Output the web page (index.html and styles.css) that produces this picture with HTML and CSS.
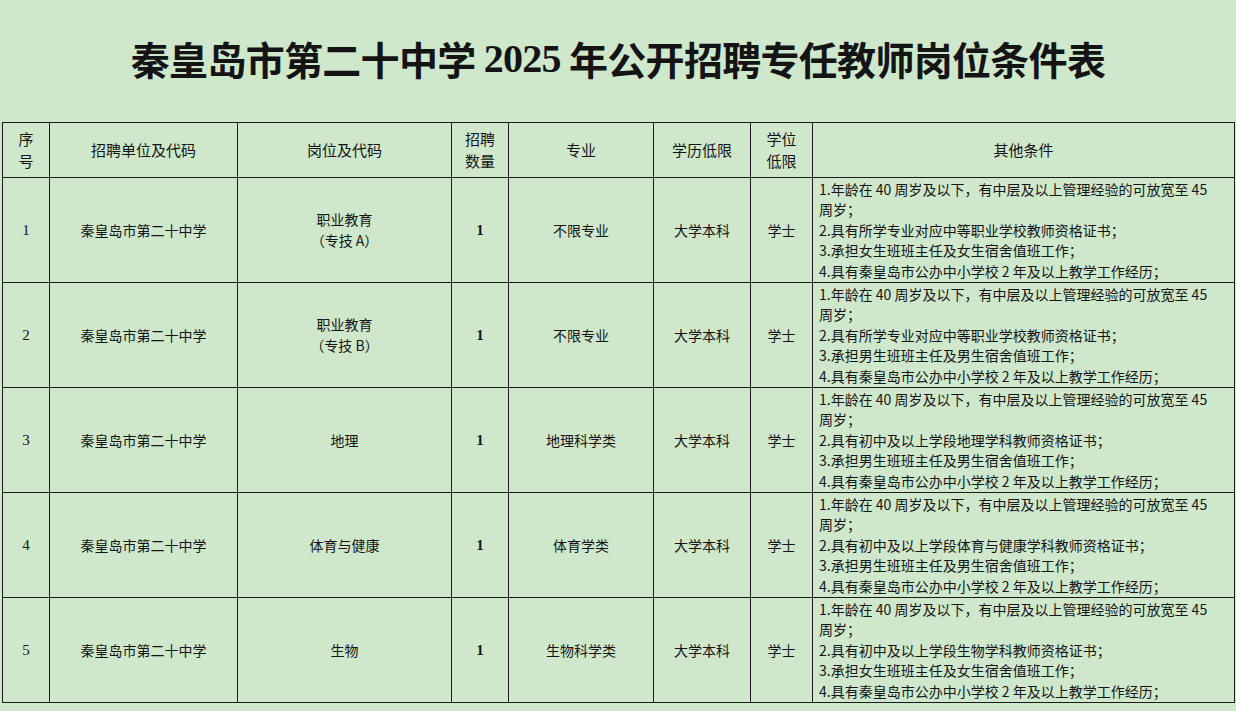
FILE: index.html
```html
<!DOCTYPE html>
<html lang="zh-CN">
<head>
<meta charset="utf-8">
<title>秦皇岛市第二十中学2025年公开招聘专任教师岗位条件表</title>
<link rel="stylesheet" href="styles.css">
</head>
<body>
<div class="page">
  <h1 class="title">秦皇岛市第二十中学 <span class="num">2025</span> 年公开招聘专任教师岗位条件表</h1>
  <table class="grid">
    <colgroup>
      <col class="c1"><col class="c2"><col class="c3"><col class="c4"><col class="c5"><col class="c6"><col class="c7"><col class="c8">
    </colgroup>
    <thead>
      <tr class="head">
        <th>序<br>号</th>
        <th>招聘单位及代码</th>
        <th>岗位及代码</th>
        <th>招聘<br>数量</th>
        <th>专业</th>
        <th>学历低限</th>
        <th>学位<br>低限</th>
        <th>其他条件</th>
      </tr>
    </thead>
    <tbody>
      <tr class="row">
        <td class="seq">1</td>
        <td>秦皇岛市第二十中学</td>
        <td>职业教育<br>（专技 A）</td>
        <td class="count">1</td>
        <td>不限专业</td>
        <td>大学本科</td>
        <td>学士</td>
        <td class="cond"><div>1.年龄在 40 周岁及以下，有中层及以上管理经验的可放宽至 45</div><div>周岁；</div><div>2.具有所学专业对应中等职业学校教师资格证书；</div><div>3.承担女生班班主任及女生宿舍值班工作；</div><div>4.具有秦皇岛市公办中小学校 2 年及以上教学工作经历；</div></td>
      </tr>
      <tr class="row">
        <td class="seq">2</td>
        <td>秦皇岛市第二十中学</td>
        <td>职业教育<br>（专技 B）</td>
        <td class="count">1</td>
        <td>不限专业</td>
        <td>大学本科</td>
        <td>学士</td>
        <td class="cond"><div>1.年龄在 40 周岁及以下，有中层及以上管理经验的可放宽至 45</div><div>周岁；</div><div>2.具有所学专业对应中等职业学校教师资格证书；</div><div>3.承担男生班班主任及男生宿舍值班工作；</div><div>4.具有秦皇岛市公办中小学校 2 年及以上教学工作经历；</div></td>
      </tr>
      <tr class="row">
        <td class="seq">3</td>
        <td>秦皇岛市第二十中学</td>
        <td>地理</td>
        <td class="count">1</td>
        <td>地理科学类</td>
        <td>大学本科</td>
        <td>学士</td>
        <td class="cond"><div>1.年龄在 40 周岁及以下，有中层及以上管理经验的可放宽至 45</div><div>周岁；</div><div>2.具有初中及以上学段地理学科教师资格证书；</div><div>3.承担男生班班主任及男生宿舍值班工作；</div><div>4.具有秦皇岛市公办中小学校 2 年及以上教学工作经历；</div></td>
      </tr>
      <tr class="row">
        <td class="seq">4</td>
        <td>秦皇岛市第二十中学</td>
        <td>体育与健康</td>
        <td class="count">1</td>
        <td>体育学类</td>
        <td>大学本科</td>
        <td>学士</td>
        <td class="cond"><div>1.年龄在 40 周岁及以下，有中层及以上管理经验的可放宽至 45</div><div>周岁；</div><div>2.具有初中及以上学段体育与健康学科教师资格证书；</div><div>3.承担男生班班主任及男生宿舍值班工作；</div><div>4.具有秦皇岛市公办中小学校 2 年及以上教学工作经历；</div></td>
      </tr>
      <tr class="row">
        <td class="seq">5</td>
        <td>秦皇岛市第二十中学</td>
        <td>生物</td>
        <td class="count">1</td>
        <td>生物科学类</td>
        <td>大学本科</td>
        <td>学士</td>
        <td class="cond"><div>1.年龄在 40 周岁及以下，有中层及以上管理经验的可放宽至 45</div><div>周岁；</div><div>2.具有初中及以上学段生物学科教师资格证书；</div><div>3.承担女生班班主任及女生宿舍值班工作；</div><div>4.具有秦皇岛市公办中小学校 2 年及以上教学工作经历；</div></td>
      </tr>
    </tbody>
  </table>
</div>
</body>
</html>
```

FILE: styles.css
```css
html, body {
  margin: 0;
  padding: 0;
  background: #cfe7cb;
}
body {
  width: 1236px;
  height: 711px;
  overflow: hidden;
  font-family: "Noto Sans CJK SC", "Noto Sans", sans-serif;
  color: #111;
}
.page {
  padding: 0 2px;
}
.title {
  margin: 0;
  height: 122px;
  display: flex;
  align-items: center;
  justify-content: center;
  font-family: "Noto Sans CJK SC", sans-serif;
  font-size: 39px;
  font-weight: 700;
  letter-spacing: -0.7px;
  color: #141414;
  padding-bottom: 6px;
  box-sizing: border-box;
  white-space: pre;
}
.title .num {
  font-family: "Liberation Serif", serif;
  font-weight: 700;
  font-size: 40px;
}
.grid {
  width: 1232px;
  border-collapse: collapse;
  table-layout: fixed;
  font-size: 14px;
}
.c1 { width: 47px; }
.c2 { width: 188px; }
.c3 { width: 214px; }
.c4 { width: 57px; }
.c5 { width: 145px; }
.c6 { width: 97px; }
.c7 { width: 62px; }
.c8 { width: 422px; }
.grid th, .grid td {
  border: 1px solid #1b1b1b;
  padding: 0;
  text-align: center;
  vertical-align: middle;
  font-weight: 400;
  line-height: 21px;
  color: #141414;
}
.head { height: 55px; }
.head th { font-size: 15px; line-height: 22px; }
.row { height: 105px; }
.grid td.seq {
  font-family: "Liberation Serif", serif;
  font-size: 15px;
}
.grid td.count {
  font-family: "Liberation Serif", serif;
  font-weight: 700;
  font-size: 15px;
}
.grid td.cond {
  text-align: left;
  padding: 0 0 0 6px;
  font-size: 14px;
  line-height: 20.6px;
  white-space: nowrap;
  overflow: hidden;
}
.cond div {
  height: 20.6px;
}
```
